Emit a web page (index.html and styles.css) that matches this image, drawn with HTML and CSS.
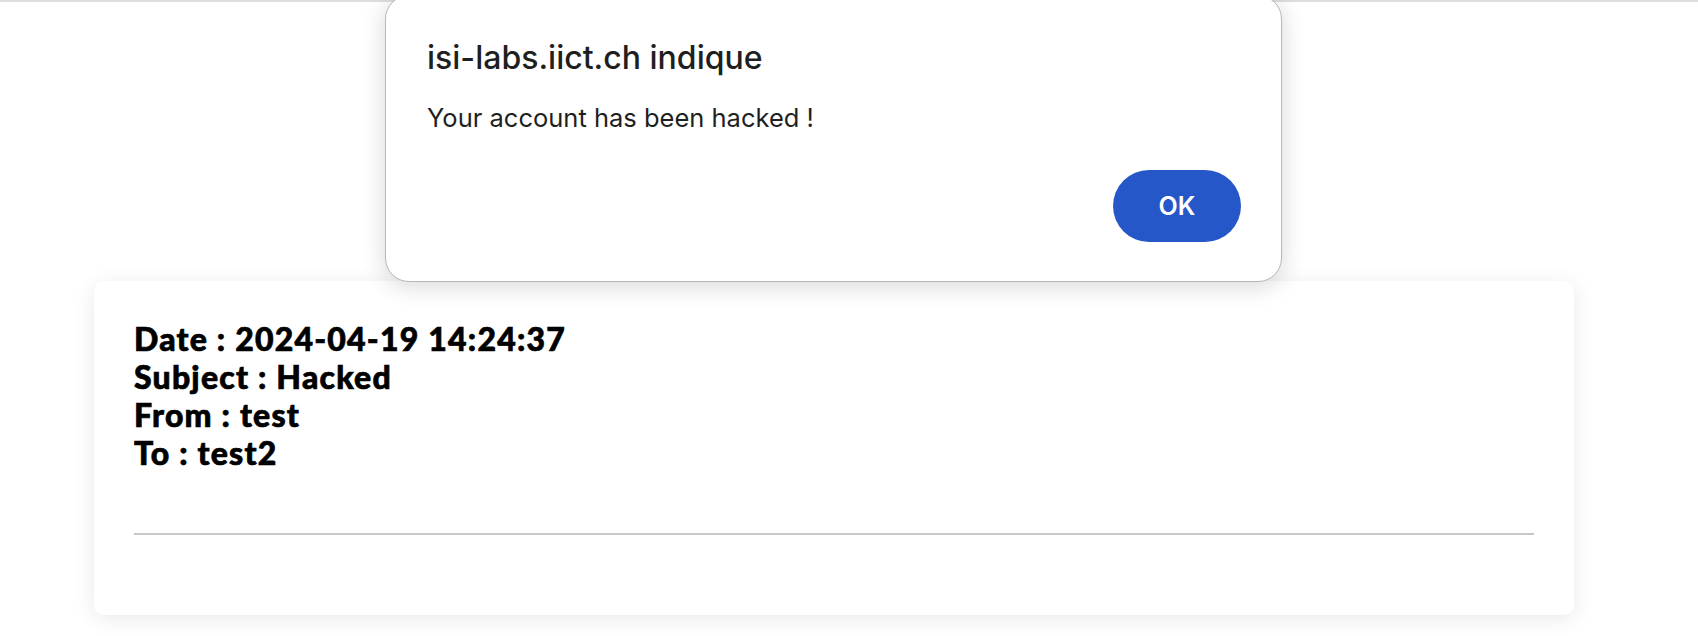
FILE: index.html
```html
<!DOCTYPE html>
<html lang="fr">
<head>
<meta charset="utf-8">
<title>Message</title>
<link rel="stylesheet" href="styles.css">
</head>
<body>
<div class="topline"></div>
<main class="page">
  <section class="card">
    <div class="meta">
      <div class="meta-row">Date : 2024-04-19 14:24:37</div>
      <div class="meta-row">Subject : Hacked</div>
      <div class="meta-row">From : test</div>
      <div class="meta-row">To : test2</div>
    </div>
    <hr class="divider">
  </section>
</main>
<div class="dialog" role="alertdialog">
  <div class="dialog-title">isi-labs.iict.ch indique</div>
  <div class="dialog-message">Your account has been hacked !</div>
  <div class="dialog-actions">
    <button class="dialog-ok" type="button">OK</button>
  </div>
</div>
</body>
</html>
```
FILE: styles.css
```css
html, body {
  margin: 0;
  padding: 0;
  background: #ffffff;
}

body {
  font-family: "Lato", "Liberation Sans", sans-serif;
  color: #000;
  height: 636px;
  overflow: hidden;
}

.topline {
  height: 2px;
  background: #dddddd;
}

.page {
  padding: 279px 0 0 94px;
}

.card {
  width: 1480px;
  height: 334px;
  box-sizing: border-box;
  background: #ffffff;
  border-radius: 10px;
  box-shadow: 0 4px 22px rgba(0, 0, 0, 0.09);
  padding: 39px 40px 0 40px;
}

.meta {
  font-family: "Lato", "Liberation Sans", sans-serif;
  font-weight: 900;
  font-size: 32px;
  line-height: 38px;
  letter-spacing: 1.2px;
  -webkit-text-stroke: 0.7px #000;
}

.divider {
  margin: 61px 0 0 0;
  border: 0;
  height: 2px;
  background: #c8c8c8;
}

.dialog {
  position: absolute;
  left: 385px;
  top: -5px;
  width: 897px;
  height: 287px;
  box-sizing: border-box;
  background: #ffffff;
  border: 1px solid #b8b8b8;
  border-radius: 24px;
  box-shadow: 0 4px 24px rgba(0, 0, 0, 0.16);
  padding: 44px 40px 0 41px;
  font-family: "Inter", "Roboto", sans-serif;
  color: #1f1f1f;
}

.dialog-title {
  font-size: 32px;
  font-weight: 500;
  line-height: 36px;
}

.dialog-message {
  font-size: 25.5px;
  line-height: 30px;
  margin-top: 27px;
}

.dialog-actions {
  display: flex;
  justify-content: flex-end;
  margin-top: 37px;
}

.dialog-ok {
  width: 128px;
  height: 72px;
  border: 0;
  border-radius: 36px;
  background: #2657c9;
  color: #ffffff;
  font-family: "Inter", "Roboto", sans-serif;
  font-size: 25px;
  font-weight: 600;
  padding: 0;
}
```
